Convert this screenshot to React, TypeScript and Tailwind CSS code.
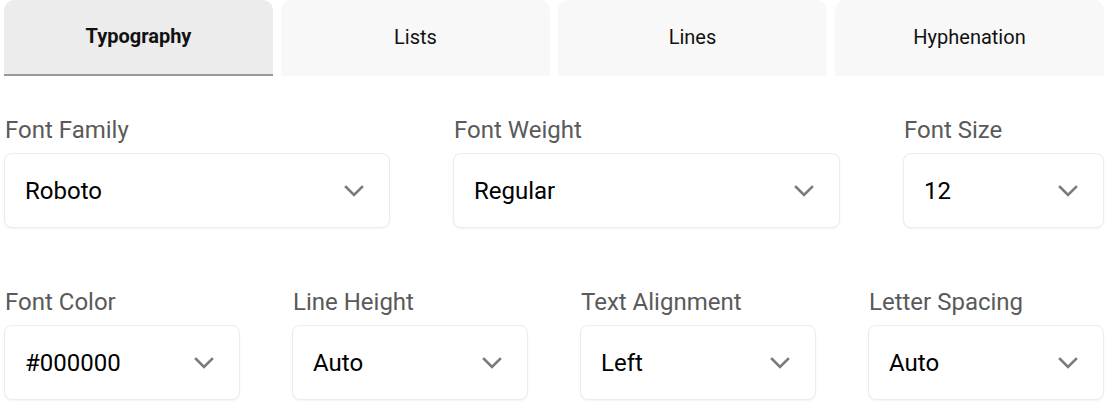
const tabs = ["Typography", "Lists", "Lines", "Hyphenation"];

type FieldProps = {
  label: string;
  value: string;
  width: string;
};

function Chevron() {
  return (
    <svg width="20" height="12" viewBox="0 0 20 12" fill="none">
      <polyline
        points="2,2 10,10 18,2"
        stroke="#7a7a7a"
        strokeWidth="2.6"
        strokeLinecap="square"
      />
    </svg>
  );
}

const Field = ({ label, value, width }: FieldProps) => {
  return (
    <div className={`${width} flex flex-col`}>
      <label className="text-[24px] leading-[28px] text-[#5a5a5a] pl-[1px]">{label}</label>
      <div className="mt-[9px] h-[75px] flex items-center justify-between pl-[20px] pr-[25px] bg-white border border-[#ececec] rounded-lg shadow-[0_1px_2px_rgba(0,0,0,0.05)]">
        <span className="text-[24px] text-black">{value}</span>
        <Chevron />
      </div>
    </div>
  );
};

export default function App() {
  return (
    <div className="w-[1108px] h-[404px] bg-white px-[4px] font-['Roboto',sans-serif] overflow-hidden">
      <div className="flex gap-2">
        {tabs.map((tab, i) => (
          <button
            key={tab}
            className={`flex-1 h-[76px] pb-[2px] rounded-t-[10px] flex items-center justify-center text-[20px] text-[#111111] ${
              i === 0
                ? "bg-[#ececec] font-bold border-b-2 border-[#999999]"
                : "bg-[#f8f8f8] font-normal"
            }`}
          >
            {tab}
          </button>
        ))}
      </div>

      <div className="mt-[40px] flex justify-between">
        <Field label="Font Family" value="Roboto" width="w-[386px]" />
        <Field label="Font Weight" value="Regular" width="w-[387px]" />
        <Field label="Font Size" value="12" width="w-[201px]" />
      </div>

      <div className="mt-[60px] flex justify-between">
        <Field label="Font Color" value="#000000" width="w-[236px]" />
        <Field label="Line Height" value="Auto" width="w-[236px]" />
        <Field label="Text Alignment" value="Left" width="w-[236px]" />
        <Field label="Letter Spacing" value="Auto" width="w-[236px]" />
      </div>
    </div>
  );
}
